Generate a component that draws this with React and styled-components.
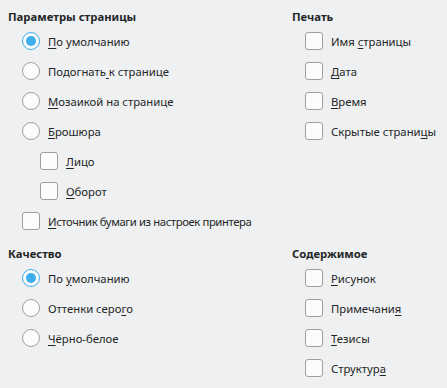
import React from "react";
import styled, { createGlobalStyle } from "styled-components";

const Global = createGlobalStyle`
  html, body { margin: 0; padding: 0; background: #eff0f1; }
  body { font-family: "Noto Sans", "Liberation Sans", sans-serif; color: #232627; }
`;

const Page = styled.div`
  width: 447px;
  height: 388px;
  background: #eff0f1;
  display: grid;
  grid-template-columns: 284px 1fr;
  grid-auto-rows: min-content;
  padding-left: 8px;
  box-sizing: border-box;
`;

const Section = styled.section`
  padding-top: ${(p) => (p.$lower ? 9 : 8)}px;
  display: flex;
  flex-direction: column;
`;

const Heading = styled.div`
  font-size: 11.3px;
  font-weight: 700;
  line-height: 17px;
  height: 17px;
  margin-bottom: 1px;
  white-space: nowrap;
`;

const Row = styled.label`
  display: flex;
  align-items: center;
  gap: 8px;
  height: 30px;
  padding-left: ${(p) => p.$indent}px;
  font-size: 11.3px;
  letter-spacing: ${(p) => (p.$tight ? "-0.4px" : "normal")};
  white-space: nowrap;
`;

const RadioBox = styled.span`
  box-sizing: border-box;
  width: 18px;
  height: 18px;
  border-radius: 50%;
  border: 1px solid ${(p) => (p.$checked ? "#3daee9" : "#9d9fa1")};
  background: #fcfcfc;
  display: flex;
  align-items: center;
  justify-content: center;
  flex: none;
  &::after {
    content: "";
    display: ${(p) => (p.$checked ? "block" : "none")};
    width: 10px;
    height: 10px;
    border-radius: 50%;
    background: #3daee9;
  }
`;

const CheckBox = styled.span`
  box-sizing: border-box;
  width: 18px;
  height: 18px;
  border-radius: 3px;
  border: 1px solid #9d9fa1;
  background: #fcfcfc;
  flex: none;
`;

const U = styled.span`
  text-decoration: underline;
  text-underline-offset: 2px;
`;

function Label({ text, m }) {
  if (m === undefined) return <span>{text}</span>;
  return (
    <span>
      {text.slice(0, m)}
      <U>{text[m]}</U>
      {text.slice(m + 1)}
    </span>
  );
}

function Radio({ text, m, checked, indent = 14 }) {
  return (
    <Row $indent={indent}>
      <RadioBox $checked={checked} />
      <Label text={text} m={m} />
    </Row>
  );
}

function Check({ text, m, indent = 14, tight }) {
  return (
    <Row $indent={indent} $tight={tight}>
      <CheckBox />
      <Label text={text} m={m} />
    </Row>
  );
}

export default function App() {
  return (
    <>
      <Global />
      <Page>
        <Section>
          <Heading>Параметры страницы</Heading>
          <Radio text="По умолчанию" m={0} checked />
          <Radio text="Подогнать к странице" m={9} />
          <Radio text="Мозаикой на странице" m={0} />
          <Radio text="Брошюра" m={0} />
          <Check text="Лицо" m={0} indent={32} />
          <Check text="Оборот" m={0} indent={32} />
          <Check text="Источник бумаги из настроек принтера" m={0} tight />
        </Section>
        <Section>
          <Heading>Печать</Heading>
          <Check text="Имя страницы" m={4} indent={13} />
          <Check text="Дата" m={0} indent={13} />
          <Check text="Время" m={0} indent={13} />
          <Check text="Скрытые страницы" m={14} indent={13} />
        </Section>
        <Section $lower>
          <Heading>Качество</Heading>
          <Radio text="По умолчанию" m={3} checked />
          <Radio text="Оттенки серого" m={12} />
          <Radio text="Чёрно-белое" m={0} />
        </Section>
        <Section $lower>
          <Heading>Содержимое</Heading>
          <Check text="Рисунок" m={0} indent={13} />
          <Check text="Примечания" m={9} indent={13} />
          <Check text="Тезисы" m={0} indent={13} />
          <Check text="Структура" m={8} indent={13} />
        </Section>
      </Page>
    </>
  );
}
